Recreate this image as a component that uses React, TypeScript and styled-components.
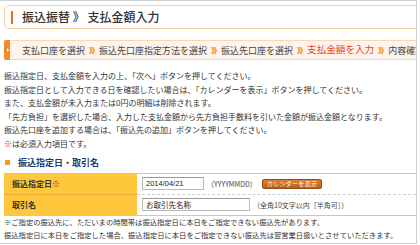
import React from 'react';
import styled, { createGlobalStyle } from 'styled-components';

const GlobalStyle = createGlobalStyle`
  html, body {
    margin: 0;
    padding: 0;
    background: #ffffff;
  }
  body {
    font-family: "Noto Sans CJK JP", "Noto Sans", sans-serif;
    color: #333333;
  }
`;

const Frame = styled.div`
  box-sizing: border-box;
  width: 417px;
  height: 244px;
  border-top: 1px solid #cfcfcf;
  border-right: 1px solid #cfcfcf;
  border-bottom: 1px solid #cfcfcf;
  padding: 4px 0 0 4px;
  overflow: hidden;
`;

const TitleBox = styled.div`
  box-sizing: border-box;
  height: 24px;
  margin-right: -10px;
  border: 1px solid #fbcfa6;
  border-radius: 5px;
  display: flex;
  align-items: center;
  padding-left: 6px;
`;

const TitleAccent = styled.span`
  width: 2px;
  height: 13px;
  background: #ea6a17;
  margin-right: 9px;
`;

const TitleText = styled.h1`
  margin: 0;
  font-size: 12px;
  font-weight: 500;
  color: #333333;
  white-space: nowrap;
  line-height: 1;
`;

const Breadcrumb = styled.div`
  box-sizing: border-box;
  height: 20px;
  margin-top: 11px;
  margin-right: -40px;
  border-top: 1px solid #fbd6b2;
  border-bottom: 1px solid #fbd6b2;
  background: #fef4ec;
  display: flex;
  align-items: center;
  white-space: nowrap;
`;

const CrumbTab = styled.span`
  position: relative;
  align-self: stretch;
  width: 6px;
  margin: -1px 12px -1px 0;
  background: #f28a2d;
  border-radius: 3px 0 0 3px;

  &::after {
    content: "";
    position: absolute;
    left: 3px;
    top: 8px;
    border-left: 2px solid #ffffff;
    border-top: 2px solid transparent;
    border-bottom: 2px solid transparent;
  }
`;

const Step = styled.span<{ $active?: boolean }>`
  font-size: ${p => (p.$active ? '9.6px' : '9px')};
  color: ${p => (p.$active ? '#e4432a' : '#444444')};
  line-height: 1;
`;

const SepIcon = styled.svg`
  width: 6px;
  height: 7px;
  margin: 0 4px;
  flex-shrink: 0;
`;

const Sep = () => (
  <SepIcon viewBox="0 0 6 7">
    <polygon points="0,0 2,0 3.5,3.5 2,7 0,7 1.5,3.5" fill="#f7a33c" />
    <polygon points="2.5,0 4.5,0 6,3.5 4.5,7 2.5,7 4,3.5" fill="#f7a33c" />
  </SepIcon>
);

const Intro = styled.div`
  margin-top: 9px;
  font-size: 8px;
  line-height: 13.5px;
  color: #333333;
  white-space: nowrap;
`;

const Line = styled.p`
  margin: 0;
`;

const Required = styled.span`
  color: #e60012;
`;

const SectionHeading = styled.h2`
  margin: 7px 0 0 1px;
  display: flex;
  align-items: center;
  font-size: 9px;
  line-height: 11px;
  font-weight: 700;
  color: #1c3c6c;

  &::before {
    content: "";
    width: 5px;
    height: 5px;
    background: #f39a1e;
    margin-right: 8px;
  }
`;

const Table = styled.div`
  margin-top: 4.5px;
  display: grid;
  grid-template-columns: 133px 1fr;
  border-top: 1.5px solid #f8c06a;
  border-bottom: 1.5px solid #f8c06a;
`;

const LabelCell = styled.div<{ $last?: boolean }>`
  box-sizing: border-box;
  height: ${p => (p.$last ? '20px' : '21px')};
  background: #fdc83c;
  padding-left: 8px;
  display: flex;
  align-items: center;
  font-size: 8px;
  font-weight: 700;
  color: #333333;
  border-bottom: ${p => (p.$last ? 'none' : '1px solid #f2ab3a')};
`;

const ValueCell = styled.div<{ $last?: boolean }>`
  box-sizing: border-box;
  height: ${p => (p.$last ? '20px' : '21px')};
  padding-left: 5px;
  display: flex;
  align-items: center;
  gap: 3px;
  font-size: 7px;
  color: #444444;
  white-space: nowrap;
  border-bottom: ${p => (p.$last ? 'none' : '1px dashed #cfcfcf')};
`;

const TextInput = styled.input<{ $width: number }>`
  box-sizing: border-box;
  width: ${p => p.$width}px;
  height: 13px;
  padding: 0 3px;
  border: 1px solid #b9b9b9;
  border-top-color: #9a9a9a;
  font-family: "Liberation Sans", "Noto Sans CJK JP", sans-serif;
  font-size: 7.5px;
  color: #222222;
  background: #ffffff;
`;

const CalendarButton = styled.button`
  box-sizing: border-box;
  height: 10px;
  margin-left: 2px;
  padding: 0 4px;
  border: 1px solid #9c4a12;
  border-radius: 2px;
  background: linear-gradient(#d98438, #bd5e18);
  color: #ffffff;
  font-family: "Noto Sans CJK JP", sans-serif;
  font-size: 6px;
  line-height: 8px;
  letter-spacing: 0.3px;
`;

const Notes = styled.div`
  font-size: 7.3px;
  line-height: 13px;
  color: #333333;
  white-space: nowrap;
`;

export default function App() {
  return (
    <>
      <GlobalStyle />
      <Frame>
        <TitleBox>
          <TitleAccent />
          <TitleText>振込振替 》 支払金額入力</TitleText>
        </TitleBox>

        <Breadcrumb>
          <CrumbTab />
          <Step>支払口座を選択</Step>
          <Sep />
          <Step>振込先口座指定方法を選択</Step>
          <Sep />
          <Step>振込先口座を選択</Step>
          <Sep />
          <Step $active>支払金額を入力</Step>
          <Sep />
          <Step>内容確認</Step>
        </Breadcrumb>

        <Intro>
          <Line>振込指定日、支払金額を入力の上、「次へ」ボタンを押してください。</Line>
          <Line>振込指定日として入力できる日を確認したい場合は、「カレンダーを表示」ボタンを押してください。</Line>
          <Line>また、支払金額が未入力または0円の明細は削除されます。</Line>
          <Line>「先方負担」を選択した場合、入力した支払金額から先方負担手数料を引いた金額が振込金額となります。</Line>
          <Line>振込先口座を追加する場合は、「振込先の追加」ボタンを押してください。</Line>
          <Line><Required>※</Required>は必須入力項目です。</Line>
        </Intro>

        <SectionHeading>振込指定日・取引名</SectionHeading>

        <Table>
          <LabelCell>振込指定日<Required>※</Required></LabelCell>
          <ValueCell>
            <TextInput $width={62} defaultValue="2014/04/21" />
            <span>（YYYYMMDD）</span>
            <CalendarButton>カレンダーを表示</CalendarButton>
          </ValueCell>
          <LabelCell $last>取引名</LabelCell>
          <ValueCell $last>
            <TextInput $width={108} defaultValue="お取引先名称" />
            <span>（全角10文字以内［半角可］）</span>
          </ValueCell>
        </Table>

        <Notes>
          <Line>※ご指定の振込先に、ただいまの時間帯は振込指定日に本日をご指定できない振込先があります。</Line>
          <Line>振込指定日に本日をご指定した場合、振込指定日に本日をご指定できない振込先は翌営業日扱いとさせていただきます。</Line>
        </Notes>
      </Frame>
    </>
  );
}
